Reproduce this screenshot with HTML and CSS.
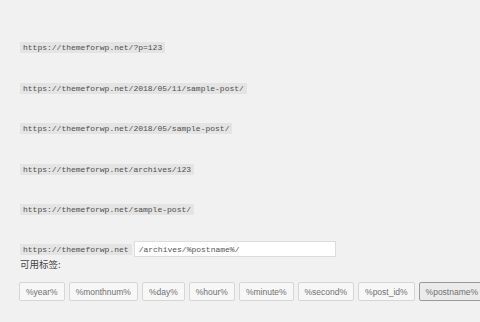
FILE: index.html
```html
<!DOCTYPE html>
<html lang="zh-CN">
<head>
<meta charset="utf-8">
<title>Permalinks</title>
<link rel="stylesheet" href="styles.css">
</head>
<body>
<div class="page">
  <div class="perm-list">
    <div class="perm-row"><code class="url">https://themeforwp.net/?p=123</code></div>
    <div class="perm-row"><code class="url">https://themeforwp.net/2018/05/11/sample-post/</code></div>
    <div class="perm-row"><code class="url">https://themeforwp.net/2018/05/sample-post/</code></div>
    <div class="perm-row"><code class="url">https://themeforwp.net/archives/123</code></div>
    <div class="perm-row"><code class="url">https://themeforwp.net/sample-post/</code></div>
  </div>
  <div class="custom-row">
    <code class="url">https://themeforwp.net</code>
    <input class="struct-input" type="text" value="/archives/%postname%/">
  </div>
  <div class="tags-label">可用标签:</div>
  <div class="tags">
    <button class="tag">%year%</button>
    <button class="tag">%monthnum%</button>
    <button class="tag">%day%</button>
    <button class="tag">%hour%</button>
    <button class="tag">%minute%</button>
    <button class="tag">%second%</button>
    <button class="tag">%post_id%</button>
    <button class="tag tag-active">%postname%</button>
  </div>
</div>
</body>
</html>
```
FILE: styles.css
```css
html, body {
  margin: 0;
  padding: 0;
  background: #f1f1f1;
  width: 480px;
  height: 322px;
  overflow: hidden;
}
.page {
  padding: 42px 0 0 20px;
  font-family: "Liberation Sans", "Noto Sans CJK SC", sans-serif;
  color: #444;
}
.perm-list {
  display: flex;
  flex-direction: column;
  gap: 29.5px;
}
.perm-row {
  display: flex;
  height: 11px;
}
.url {
  display: inline-block;
  font-family: "Liberation Mono", monospace;
  font-size: 8px;
  line-height: 11px;
  height: 11px;
  padding: 0 3px;
  background: #e4e4e4;
  color: #4f4f4f;
}
.custom-row {
  margin-top: 26px;
  display: flex;
  align-items: center;
  gap: 2px;
  height: 16px;
}
.struct-input {
  box-sizing: border-box;
  width: 202px;
  height: 16px;
  margin: 0;
  padding: 0 4px;
  border: 1px solid #dcdcdc;
  background: #fff;
  font-family: "Liberation Mono", monospace;
  font-size: 8px;
  color: #555;
  outline: none;
}
.tags-label {
  margin-top: 1px;
  font-family: "Noto Sans CJK SC", sans-serif;
  font-size: 9.5px;
  line-height: 13px;
  color: #444;
}
.tags {
  margin-top: 11px;
  margin-left: -1px;
  display: flex;
  gap: 4px;
  white-space: nowrap;
}
.tag {
  flex: none;
  box-sizing: border-box;
  height: 19px;
  margin: 0;
  padding: 0 6px;
  border: 1px solid #d6d6d6;
  border-radius: 2px;
  background: #f7f7f7;
  font-family: "Liberation Sans", sans-serif;
  font-size: 8.5px;
  color: #707070;
}
.tag-active {
  border-color: #9a9a9a;
  background: #ebebeb;
}
```
